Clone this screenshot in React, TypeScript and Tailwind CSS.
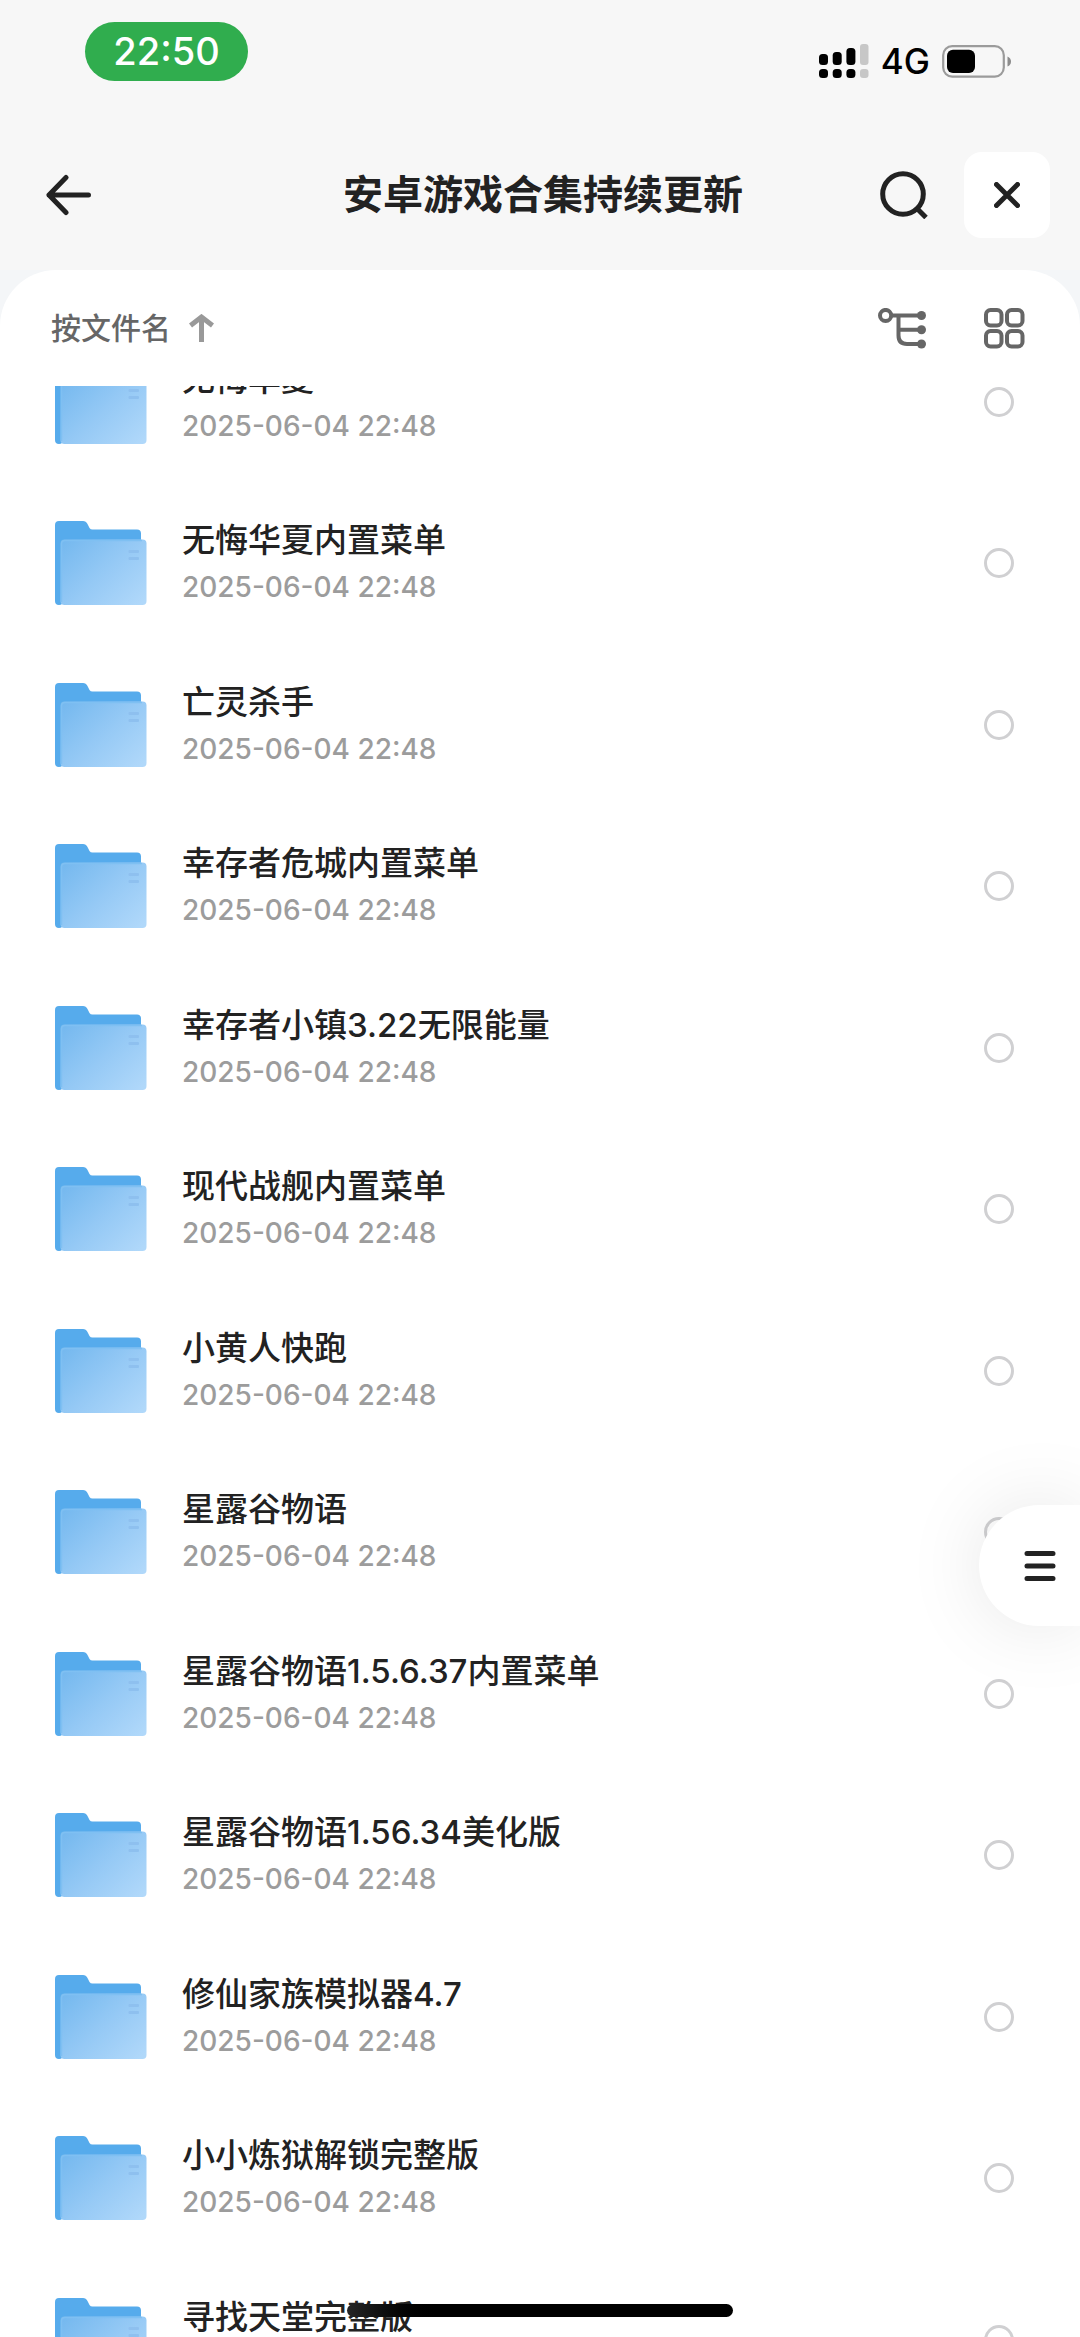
import { useState } from 'react';

const files = [
  { name: '无悔华夏', time: '2025-06-04 22:48' },
  { name: '无悔华夏内置菜单', time: '2025-06-04 22:48' },
  { name: '亡灵杀手', time: '2025-06-04 22:48' },
  { name: '幸存者危城内置菜单', time: '2025-06-04 22:48' },
  { name: '幸存者小镇3.22无限能量', time: '2025-06-04 22:48' },
  { name: '现代战舰内置菜单', time: '2025-06-04 22:48' },
  { name: '小黄人快跑', time: '2025-06-04 22:48' },
  { name: '星露谷物语', time: '2025-06-04 22:48' },
  { name: '星露谷物语1.5.6.37内置菜单', time: '2025-06-04 22:48' },
  { name: '星露谷物语1.56.34美化版', time: '2025-06-04 22:48' },
  { name: '修仙家族模拟器4.7', time: '2025-06-04 22:48' },
  { name: '小小炼狱解锁完整版', time: '2025-06-04 22:48' },
  { name: '寻找天堂完整版', time: '2025-06-04 22:48' },
];

const SignalIcon = () => (
  <svg width="50" height="34" viewBox="0 0 50 34">
    <rect x="0" y="10" width="9" height="11" rx="3.5" />
    <rect x="13.7" y="8" width="9" height="13" rx="3.5" />
    <rect x="27.4" y="4" width="9" height="17" rx="3.5" />
    <rect x="41" y="0" width="8.5" height="21" rx="3" fill="#c7c7c7" />
    <rect x="0" y="25" width="9" height="9" rx="3.5" />
    <rect x="13.7" y="25" width="9" height="9" rx="3.5" />
    <rect x="27.4" y="25" width="9" height="9" rx="3.5" />
    <rect x="41" y="25" width="8.5" height="9" rx="3" fill="#c7c7c7" />
  </svg>
);

const BatteryIcon = () => (
  <svg width="69" height="33" viewBox="0 0 69 33">
    <rect x="1.2" y="1.2" width="60.6" height="30.4" rx="9" fill="none" stroke="#9b9b9b" strokeWidth="2.2" />
    <rect x="5" y="4.7" width="28" height="23.4" rx="6" />
    <path d="M65.5 11.5q3.5 1.5 3.5 5t-3.5 5z" fill="#8c8c8c" />
  </svg>
);

const FolderIcon = () => (
  <svg width="92" height="84" viewBox="0 0 92 84" className="shrink-0">
    <defs>
      <linearGradient id="folderFront" x1="0" y1="0.1" x2="1" y2="0.9">
        <stop offset="0" stopColor="#76b9ef" />
        <stop offset="0.5" stopColor="#95c9f5" />
        <stop offset="1" stopColor="#b0d8fa" />
      </linearGradient>
    </defs>
    <path d="M4 0H28q3 0 4.5 3l2 4q1 1.5 3 1.5H82q4 0 4 4V30H8V80q0 4-4 4t-4-4V4q0-4 4-4z" fill="#56abec" />
    <rect x="5.5" y="18.5" width="86" height="65.5" rx="4" fill="url(#folderFront)" />
    <path d="M6.5 81V23q0-3.5 3.5-3.5H87" fill="none" stroke="#7fc0f2" strokeWidth="1.5" />
    <rect x="73.5" y="29" width="10.5" height="3" rx="1" fill="#8ec0ef" />
    <rect x="73.5" y="36" width="10.5" height="3" rx="1" fill="#8ec0ef" />
  </svg>
);

const StatusBar = () => (
  <div className="flex items-start justify-between pt-[22px] pr-[69px] pl-[85px] text-black">
    <div className="flex h-[59px] w-[163px] items-center justify-center rounded-full bg-[#30ad4e] text-[38px] font-medium text-white">
      22:50
    </div>
    <div className="flex h-[78px] items-center gap-3">
      <SignalIcon />
      <span className="text-[35px] font-medium">4G</span>
      <BatteryIcon />
    </div>
  </div>
);

const Header = () => (
  <header className="grid grid-cols-[1fr_auto_1fr] items-center pt-[52px] pr-[30px] pb-8 pl-9">
    <button type="button" aria-label="返回" className="ml-2 w-fit">
      <svg width="48" height="42" viewBox="0 0 48 42" fill="none" stroke="currentColor" strokeWidth="5" strokeLinecap="round" strokeLinejoin="round">
        <path d="M22 3.5L5 21l17 17.5M5 21h39.5" />
      </svg>
    </button>
    <h1 className="text-[40px] leading-[60px] font-bold">安卓游戏合集持续更新</h1>
    <div className="flex items-center justify-end gap-9">
      <button type="button" aria-label="搜索">
        <svg width="48" height="48" viewBox="0 0 48 48" fill="none" stroke="currentColor" strokeWidth="5">
          <circle cx="23" cy="23" r="20.3" />
          <path d="M37 37.5l9 9" />
        </svg>
      </button>
      <button type="button" aria-label="关闭" className="flex h-[86px] w-[86px] items-center justify-center rounded-[18px] bg-white">
        <svg width="26" height="26" viewBox="0 0 26 26" fill="none" stroke="currentColor" strokeWidth="5" strokeLinecap="round">
          <path d="M2.5 2.5l21 21M23.5 2.5l-21 21" />
        </svg>
      </button>
    </div>
  </header>
);

const Toolbar = () => (
  <div className="flex h-[116px] shrink-0 items-center justify-between pr-[55px] pl-[51px] text-[#666]">
    <button type="button" className="flex items-center gap-[18px] text-[30px] leading-[44px] font-medium">
      按文件名
      <svg width="25" height="28" viewBox="0 0 25 28" fill="none" stroke="#999" strokeWidth="5">
        <path d="M1.5 11.5L12.5 3l11 8.5M12.5 3v25" />
      </svg>
    </button>
    <div className="flex items-center gap-[58px]">
      <button type="button" aria-label="目录树">
        <svg width="48" height="41" viewBox="0 0 48 41" fill="none" stroke="currentColor" strokeWidth="4">
          <circle cx="7.6" cy="7.5" r="5.6" />
          <path d="M14 7.5h30M20.5 7.5v20q0 8.5 8.5 8.5h15M20.5 21.7h23" />
          <g fill="currentColor" stroke="none">
            <circle cx="43.5" cy="7.5" r="4.5" />
            <circle cx="43.5" cy="21.7" r="4.5" />
            <circle cx="43.5" cy="36" r="4.5" />
          </g>
        </svg>
      </button>
      <button type="button" aria-label="宫格视图">
        <svg width="41" height="41" viewBox="0 0 41 41" fill="none" stroke="currentColor" strokeWidth="4">
          <rect x="2" y="2" width="15.5" height="15.5" rx="4.5" />
          <rect x="23" y="2" width="15.5" height="15.5" rx="4.5" />
          <rect x="2" y="23" width="15.5" height="15.5" rx="4.5" />
          <rect x="23" y="23" width="15.5" height="15.5" rx="4.5" />
        </svg>
      </button>
    </div>
  </div>
);

const App = () => {
  const [checked, setChecked] = useState<string[]>([]);

  const toggle = (name: string) => {
    setChecked((prev) => (prev.includes(name) ? prev.filter((item) => item !== name) : [...prev, name]));
  };

  const renderFiles = () => {
    return files.map(({ name, time }) => (
      <li key={name} className="h-[161px] even:h-[162px]">
        <label className="flex h-full items-center pr-[66px] pl-[55px]">
          <FolderIcon />
          <div className="ml-[35px] flex-1">
            <p className="text-[33px] leading-[48px] font-medium text-[#222]">{name}</p>
            <p className="text-[28px] leading-[46px] font-medium text-[#9c9c9c]">{time}</p>
          </div>
          <input
            type="checkbox"
            className="h-[30px] w-[30px] appearance-none rounded-full border-3 border-[#d0d0d2] checked:border-[#56abec] checked:bg-[#56abec]"
            checked={checked.includes(name)}
            onChange={() => toggle(name)}
          />
        </label>
      </li>
    ));
  };

  return (
    <div className="relative flex h-screen flex-col overflow-hidden bg-[#f4f6f8] font-['Inter','Noto_Sans_CJK_SC',sans-serif] text-[#222]">
      <div className="bg-[#f7f7f7]">
        <StatusBar />
        <Header />
      </div>
      <main className="flex min-h-0 flex-1 flex-col rounded-t-[56px] bg-white">
        <Toolbar />
        <div className="min-h-0 flex-1 overflow-hidden">
          <ul className="-mt-[65px]">{renderFiles()}</ul>
        </div>
      </main>
      <button
        type="button"
        aria-label="菜单"
        className="absolute right-0 bottom-[711px] flex h-[121px] w-[101px] items-center justify-end rounded-l-full bg-white pr-6 shadow-[0_0_80px_rgba(0,0,0,0.1)]"
      >
        <svg width="32" height="32" viewBox="0 0 32 32" fill="none" stroke="currentColor" strokeWidth="5" strokeLinecap="round">
          <path d="M3 3.5h26M3 16h26M3 28.5h26" />
        </svg>
      </button>
      <div className="absolute bottom-5 left-1/2 h-[13px] w-[386px] -translate-x-1/2 rounded-full bg-linear-to-r from-[#262626] via-black via-25% to-black" />
    </div>
  );
};

export default App;
